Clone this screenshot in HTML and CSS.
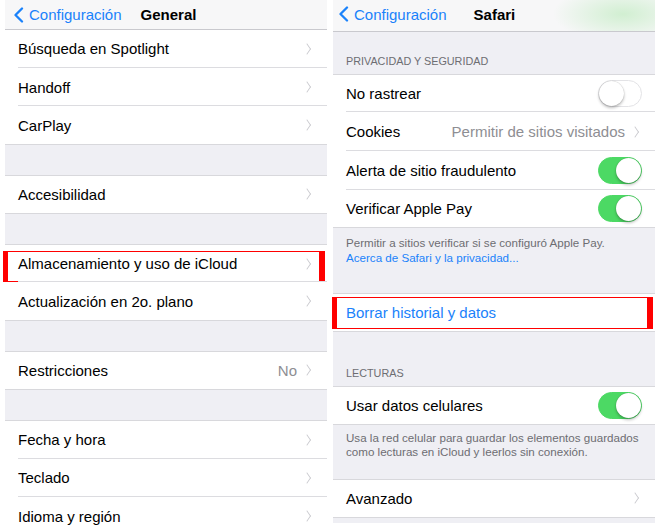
FILE: index.html
```html
<!DOCTYPE html>
<html lang="es">
<head>
<meta charset="utf-8">
<title>Configuración</title>
<link rel="stylesheet" href="styles.css">
</head>
<body>
<div class="screens">
  <section class="panel panel-left">
    <header class="nav">
      <span class="back"><svg class="back-icon" viewBox="0 0 11 16" width="11" height="16"><polyline points="9,1.5 2.5,8 9,14.5" fill="none" stroke="#1a82fb" stroke-width="2.3" stroke-linecap="round" stroke-linejoin="round"/></svg>Configuración</span>
      <span class="title">General</span>
    </header>
    <ul class="group group-first">
      <li class="row"><span class="label">Búsqueda en Spotlight</span><span class="chev"></span></li>
      <li class="row"><span class="label">Handoff</span><span class="chev"></span></li>
      <li class="row"><span class="label">CarPlay</span><span class="chev"></span></li>
    </ul>
    <div class="spacer"></div>
    <ul class="group">
      <li class="row"><span class="label">Accesibilidad</span><span class="chev"></span></li>
    </ul>
    <div class="spacer"></div>
    <ul class="group">
      <li class="row"><span class="label">Almacenamiento y uso de iCloud</span><span class="chev"></span><span class="mark mark-left"></span></li>
      <li class="row"><span class="label">Actualización en 2o. plano</span><span class="chev"></span></li>
    </ul>
    <div class="spacer"></div>
    <ul class="group">
      <li class="row"><span class="label">Restricciones</span><span class="value">No</span><span class="chev"></span></li>
    </ul>
    <div class="spacer"></div>
    <ul class="group">
      <li class="row"><span class="label">Fecha y hora</span><span class="chev"></span></li>
      <li class="row"><span class="label">Teclado</span><span class="chev"></span></li>
      <li class="row"><span class="label">Idioma y región</span><span class="chev"></span></li>
    </ul>
  </section>

  <section class="panel panel-right">
    <header class="nav nav-safari">
      <span class="back"><svg class="back-icon" viewBox="0 0 11 16" width="11" height="16"><polyline points="9,1.5 2.5,8 9,14.5" fill="none" stroke="#1a82fb" stroke-width="2.3" stroke-linecap="round" stroke-linejoin="round"/></svg>Configuración</span>
      <span class="title">Safari</span>
    </header>
    <div class="section-head head-privacy">PRIVACIDAD Y SEGURIDAD</div>
    <ul class="group">
      <li class="row"><span class="label">No rastrear</span><span class="toggle"></span></li>
      <li class="row"><span class="label">Cookies</span><span class="value">Permitir de sitios visitados</span><span class="chev"></span></li>
      <li class="row"><span class="label">Alerta de sitio fraudulento</span><span class="toggle on"></span></li>
      <li class="row"><span class="label">Verificar Apple Pay</span><span class="toggle on"></span></li>
    </ul>
    <div class="section-foot foot-privacy">
      <p>Permitir a sitios verificar si se configuró Apple Pay.</p>
      <p class="link">Acerca de Safari y la privacidad...</p>
    </div>
    <ul class="group">
      <li class="row"><span class="label action">Borrar historial y datos</span><span class="mark mark-right"></span></li>
    </ul>
    <div class="section-head head-reading">LECTURAS</div>
    <ul class="group">
      <li class="row"><span class="label">Usar datos celulares</span><span class="toggle on"></span></li>
    </ul>
    <div class="section-foot foot-reading">
      <p>Usa la red celular para guardar los elementos guardados como lecturas en iCloud y leerlos sin conexión.</p>
    </div>
    <ul class="group">
      <li class="row"><span class="label">Avanzado</span><span class="chev"></span></li>
    </ul>
    <div class="tail"></div>
  </section>
</div>
</body>
</html>
```

FILE: styles.css
```css
* { box-sizing: border-box; }

html, body {
  margin: 0;
  padding: 0;
  background: #ffffff;
  height: 528px;
  overflow: hidden;
}

body {
  font-family: "Liberation Sans", Arial, sans-serif;
  color: #000;
}

.screens {
  display: flex;
  gap: 6px;
  padding-left: 5px;
  align-items: flex-start;
}

.panel {
  width: 322px;
  background: #efeff4;
  display: flex;
  flex-direction: column;
}

.panel-left { height: 528px; }

.nav {
  height: 30px;
  background: #f7f7f8;
  border-bottom: 1px solid #c9c9ce;
  display: flex;
  align-items: center;
  padding-left: 8px;
  font-size: 15px;
  flex-shrink: 0;
}

.panel-right .nav {
  height: 32px;
  padding-left: 5px;
  padding-bottom: 3px;
}

.nav-safari {
  background:
    radial-gradient(ellipse 70px 28px at 290px 14px, rgba(196, 236, 196, 0.75), rgba(196, 236, 196, 0) 100%),
    #f7f7f8;
}

.back {
  display: flex;
  align-items: center;
  color: #1a82fb;
  gap: 5px;
}

.back-icon { display: block; }

.title {
  font-weight: bold;
  margin-left: 19px;
}

.nav-safari .title { margin-left: 27px; }

.group {
  list-style: none;
  margin: 0;
  padding: 0;
  background: #fff;
  border-top: 1px solid #d8d8dc;
  border-bottom: 1px solid #d8d8dc;
}

.group-first { border-top: none; }

.row {
  position: relative;
  height: 38.7px;
  display: flex;
  align-items: center;
  padding: 0 15px 0 13px;
  font-size: 15px;
}

.row + .row::before {
  content: "";
  position: absolute;
  top: -1px;
  left: 13px;
  right: 0;
  border-top: 1px solid #dcdce0;
}

.group .row:first-child { height: 37.7px; }
.group .row:last-child { height: 37.7px; }
.group .row:only-child { height: 36.7px; }

.label { flex: 1; white-space: nowrap; }

.action { color: #1a82fb; }

.value {
  color: #8e8e93;
  margin-right: 6px;
}

.chev {
  width: 8px;
  height: 8px;
  border-top: 1.5px solid #c7c7cc;
  border-right: 1.5px solid #c7c7cc;
  transform: scaleX(0.7) rotate(45deg);
  margin-right: 1px;
}

.toggle {
  position: relative;
  width: 44px;
  height: 27px;
  border-radius: 14px;
  background: #fff;
  border: 1px solid #e3e3e6;
  margin-right: -2px;
}

.toggle::after {
  content: "";
  position: absolute;
  top: 0;
  left: 0;
  width: 25px;
  height: 25px;
  border-radius: 50%;
  background: #fff;
  box-shadow: 0 2px 3px rgba(0, 0, 0, 0.25), 0 0 1px rgba(0, 0, 0, 0.3);
}

.toggle.on {
  background: #4cd964;
  border-color: #4cd964;
}

.toggle.on::after { left: 17px; }

.spacer { height: 30px; flex-shrink: 0; }

.mark {
  position: absolute;
  border-style: solid;
  border-color: #ff0000;
  border-width: 1.5px 6px 1.5px 5px;
  pointer-events: none;
}

.mark-left { top: 6px; bottom: 0; left: -2px; right: 2px; }
.mark-right { top: 3px; bottom: 2px; left: -1px; right: 2px; }

.section-head {
  font-size: 10.8px;
  color: #6d6d72;
  padding: 0 13px;
  display: flex;
  align-items: flex-end;
  line-height: 15px;
}

.head-privacy { height: 41.6px; padding-bottom: 5px; }
.head-reading { height: 54.3px; padding-bottom: 4.5px; }

.section-foot {
  font-size: 11.6px;
  color: #6d6d72;
  padding: 7px 13px 0;
  line-height: 15px;
}

.section-foot p { margin: 0; }
.section-foot .link { color: #1a82fb; }

.foot-privacy { height: 64.6px; }
.foot-reading { height: 54.3px; padding-top: 6px; line-height: 14.5px; }

.tail { height: 5px; }
```
